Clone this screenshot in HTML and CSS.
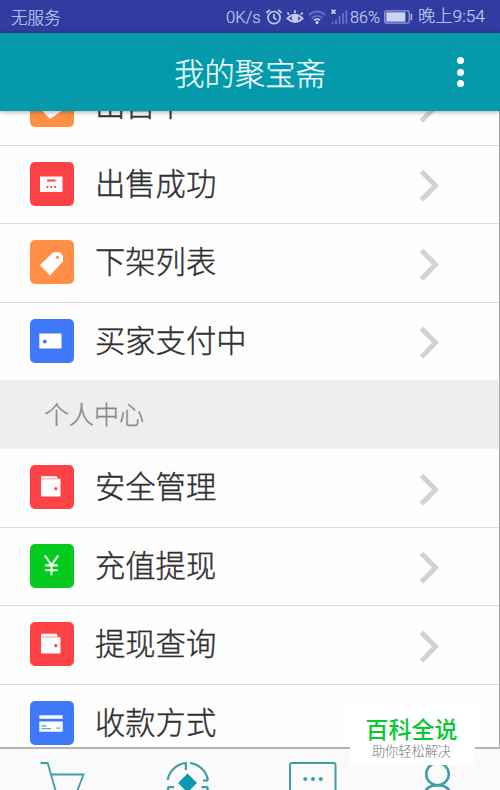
FILE: index.html
```html
<!DOCTYPE html>
<html lang="zh-CN">
<head>
    <meta charset="utf-8">
    <title>我的聚宝斋</title>
    <link rel="stylesheet" href="styles.css">
</head>
<body>
    <div class="status-bar">
        <span class="carrier">无服务</span>
        <div class="status-right">
            <span class="speed">0K/s</span>
            <svg class="st-alarm" width="18" height="18" viewBox="0 0 18 18" fill="none" stroke="#c3c8ee" stroke-width="1.7">
                <circle cx="9" cy="9.6" r="6.1"/>
                <path d="M9 6v4l2.6 1.6M1.3 4.8l3.4-3M16.7 4.8l-3.4-3"/>
            </svg>
            <svg class="st-eye" width="18" height="18" viewBox="0 0 18 18" fill="none" stroke="#c3c8ee" stroke-width="1.8">
                <path d="M1.4 10.5Q9 2.8 16.6 10.5Q9 17.4 1.4 10.5zM3 6.7L1.5 4.5M9 5V2.2M15 6.7l1.5-2.2"/>
                <circle cx="9" cy="10" r="2.4" fill="#c3c8ee"/>
            </svg>
            <svg class="st-wifi" width="18" height="18" viewBox="0 0 18 18" fill="none" stroke-width="1.8">
                <path d="M1 7Q9 0 17 7M3.6 10.2Q9 5.5 14.4 10.2" stroke="#6871c4"/>
                <path d="M6 12.3Q9 9.9 12 12.3" stroke="#c3c8ee"/>
                <circle cx="9" cy="14.4" r="1.5" fill="#dde0f8"/>
            </svg>
            <svg class="st-signal" width="18" height="18" viewBox="0 0 18 18" fill="none">
                <path d="M2.6 16v-2M6 16v-4M9.5 16V8M13 16V5M16.4 16V2" stroke="#6871c4" stroke-width="1.8"/>
                <path d="M1.5 1.7l4 4M5.5 1.7l-4 4" stroke="#dde0f8" stroke-width="1.5"/>
            </svg>
            <span class="percent">86%</span>
            <svg class="st-battery" width="29" height="14" viewBox="0 0 29 14">
                <rect x=".8" y=".8" width="24.4" height="12.4" rx="1.8" fill="none" stroke="#969dda" stroke-width="1.3"/>
                <rect x="2.3" y="2.3" width="19" height="9.4" fill="#cdd1f2"/>
                <path d="M27.4 3.8v6.4" stroke="#aeb4e5" stroke-width="1.6"/>
            </svg>
            <span class="clock">晚上9:54</span>
        </div>
    </div>

    <div class="header">
        <h1>我的聚宝斋</h1>
        <div class="more"><i></i><i></i><i></i></div>
    </div>

    <div class="list">
        <div class="row row-first row-tall">
            <svg class="icon orange" viewBox="0 0 44 44"><path d="M10 25.5h25L20 36z" fill="#fff"/></svg>
            <span class="label">出售中</span>
            <svg class="arrow" viewBox="0 0 20 34"><path d="M2.5 2.5L16.5 16.5L2.5 31"/></svg>
        </div>
        <div class="row">
            <svg class="icon red" viewBox="0 0 44 44">
                <path d="M10 14.5h22.5V30H10z" fill="#fff"/>
                <path d="M17 18.5h8.5" stroke="#ff4245" stroke-width="2"/>
                <path d="M16.5 25h1.8M20.4 25h1.8M24.3 25h1.8" stroke="#ff4245" stroke-width="1.8"/>
            </svg>
            <span class="label">出售成功</span>
            <svg class="arrow" viewBox="0 0 20 34"><path d="M2.5 2.5L16.5 16.5L2.5 31"/></svg>
        </div>
        <div class="row row-tall">
            <svg class="icon orange" viewBox="0 0 44 44">
                <path d="M10 25L22.3 13.2Q23.4 12.2 25 12.2h4.6q3.4 1.8 3.4 4.8v4.2L20 35.5z" fill="#fff"/>
                <circle cx="27.5" cy="17.3" r="1.6" fill="#ff8f45"/>
            </svg>
            <span class="label">下架列表</span>
            <svg class="arrow arrow-low" viewBox="0 0 20 34"><path d="M2.5 2.5L16.5 16.5L2.5 31"/></svg>
        </div>
        <div class="row row-last">
            <svg class="icon blue" viewBox="0 0 44 44">
                <path d="M9.3 14.5H31.5V29.5H9.3z" fill="#fff"/>
                <circle cx="14.8" cy="22.5" r="1.9" fill="#3e79fa"/>
            </svg>
            <span class="label">买家支付中</span>
            <svg class="arrow" viewBox="0 0 20 34"><path d="M2.5 2.5L16.5 16.5L2.5 31"/></svg>
        </div>

        <div class="section">个人中心</div>

        <div class="row row-tall">
            <svg class="icon red" viewBox="0 0 44 44">
                <path d="M11 12.5q0-1.3 1.3-1.3h14q1.2 0 1.2 2.6h3V31q0 .6-.6.6H11z" fill="#fff"/>
                <path d="M12 13.8h15.5" stroke="#ff8b8d" stroke-width=".9"/>
                <circle cx="25.8" cy="23.7" r="1.6" fill="#ff4245"/>
            </svg>
            <span class="label">安全管理</span>
            <svg class="arrow arrow-low" viewBox="0 0 20 34"><path d="M2.5 2.5L16.5 16.5L2.5 31"/></svg>
        </div>
        <div class="row">
            <svg class="icon green" viewBox="0 0 44 44">
                <path d="M14.8 11.5L21.5 21l6.7-9.5M21.5 21v10.3M15.2 21.4h12.7M15.2 26.2h12.7" fill="none" stroke="#f0fff0" stroke-width="2.1"/>
            </svg>
            <span class="label">充值提现</span>
            <svg class="arrow" viewBox="0 0 20 34"><path d="M2.5 2.5L16.5 16.5L2.5 31"/></svg>
        </div>
        <div class="row row-tall">
            <svg class="icon red" viewBox="0 0 44 44">
                <path d="M11 13q0-1.3 1.3-1.3h14q1.2 0 1.2 3.6h3V31q0 .6-.6.6H11z" fill="#fff"/>
                <path d="M12 15h15.5" stroke="#ff8b8d" stroke-width=".9"/>
                <circle cx="25.8" cy="23.7" r="1.6" fill="#ff4245"/>
            </svg>
            <span class="label">提现查询</span>
            <svg class="arrow arrow-low" viewBox="0 0 20 34"><path d="M2.5 2.5L16.5 16.5L2.5 31"/></svg>
        </div>
        <div class="row row-cut">
            <svg class="icon blue" viewBox="0 0 44 44">
                <path d="M9.3 14.3h23.4v3.5H9.3zM9.3 20.5h23.4v10.2H9.3z" fill="#fff"/>
                <path d="M11.5 25h5M11.5 27.7h9.5M26.5 27.2h3.7" stroke="#6d98f8" stroke-width="1.3"/>
            </svg>
            <span class="label">收款方式</span>
        </div>
    </div>

    <div class="tab-bar">
        <div class="tab">
            <svg width="46" height="54" viewBox="0 0 46 54" fill="none" stroke="#409da6" stroke-width="1.8">
                <path d="M.5 2h7.2l10 35h20M10.5 13.5H43.5L36.5 32"/>
            </svg>
        </div>
        <div class="tab">
            <svg width="44" height="54" viewBox="0 0 44 54" fill="none" stroke="#409da6" stroke-width="2.2">
                <path d="M1.6 19A21 21 0 0 1 19.8 2V9M24 2A21 21 0 0 1 42 19.5M1.6 26.2H8M1.6 26.2A21 21 0 0 0 19 43.5M42 26.2H35.5M42 26.2A21 21 0 0 1 24 43.5M42 19.5h-5"/>
                <path d="M21.5 12.5L31 22L21.5 31.5L12 22z" fill="#0d99ac" stroke="none"/>
            </svg>
        </div>
        <div class="tab">
            <svg width="48" height="54" viewBox="0 0 48 54" fill="none" stroke="#409da6" stroke-width="2">
                <rect x="1" y="2" width="45.5" height="38" rx="2"/>
                <g fill="#409da6" stroke="none"><circle cx="16.2" cy="18" r="2"/><circle cx="24" cy="18" r="2"/><circle cx="31.8" cy="18" r="2"/></g>
            </svg>
        </div>
        <div class="tab">
            <svg width="34" height="54" viewBox="0 0 34 54" fill="none" stroke="#409da6" stroke-width="2.5">
                <circle cx="16.5" cy="13" r="11.3"/>
                <path d="M2 40Q2 24.3 16.5 24.3T31 40"/>
            </svg>
        </div>
    </div>

    <div class="watermark">
        <div class="wm-title">百科全说</div>
        <div class="wm-sub">助你轻松解决</div>
    </div>
</body>
</html>
```

FILE: styles.css
```css
* {
    box-sizing: border-box;
}

body {
    margin: 0;
    width: 500px;
    height: 790px;
    overflow: hidden;
    background: #fefefe;
    display: flex;
    flex-direction: column;
    position: relative;
    font-family: Roboto, "Noto Sans CJK SC", sans-serif;
}

.status-bar {
    height: 33px;
    flex: none;
    background: #303c9f;
    color: #c3c8ee;
    display: flex;
    justify-content: space-between;
    align-items: center;
    padding: 1px 11px 0;
    font-size: 16.6px;
    font-weight: 300;
    white-space: nowrap;
    -webkit-text-stroke: 0.2px;
}

.status-right {
    display: flex;
    align-items: center;
}

.status-right svg {
    flex: none;
}

.speed {
    width: 39px;
}

.st-eye {
    margin-left: 3px;
}

.st-wifi {
    margin-left: 4px;
}

.st-signal {
    margin-left: 4px;
}

.percent {
    width: 34px;
    margin-left: 2px;
    font-size: 16.2px;
}

.clock {
    width: 71px;
    margin-left: 5px;
    font-size: 17.3px;
    line-height: 24px;
    padding-bottom: 2px;
}

.header {
    height: 78px;
    flex: none;
    background: #049aac;
    display: flex;
    align-items: center;
    justify-content: center;
    position: relative;
    box-shadow: 0 1px 5px rgba(0,0,0,0.35);
    z-index: 1;
}

.header h1 {
    margin: 0;
    padding-top: 5px;
    font-size: 30.3px;
    font-weight: 300;
    color: #f0ffff;
    line-height: 40px;
    -webkit-text-stroke: 0.25px;
}

.more {
    position: absolute;
    right: 36px;
    top: 24px;
    display: flex;
    flex-direction: column;
    gap: 4.5px;
}

.more i {
    width: 7px;
    height: 7px;
    border-radius: 50%;
    background: #fff;
}

.list {
    height: 638px;
    flex: none;
    overflow: hidden;
    display: flex;
    flex-direction: column;
    border-right: 1px solid #aaa;
    border-bottom: 2px solid #b3b3b3;
}

.row {
    height: 78px;
    flex: none;
    display: flex;
    align-items: flex-start;
    padding: 16px 60px 0 30px;
    border-bottom: 1px solid #d9d9d9;
}

.row-tall {
    height: 79px;
}

/* scrolled halfway under the header */
.row-first {
    margin-top: -44px;
}

.row-last {
    height: 77px;
    border-bottom: none;
}

.row-cut {
    border-bottom: none;
}

.icon {
    width: 44px;
    height: 44px;
    flex: none;
    border-radius: 5px;
}

.orange { background: #ff8f45; }
.red { background: #ff4245; }
.blue { background: #3e79fa; }
.green { background: #04cb1d; }

.label {
    margin-left: 21px;
    padding-top: 1px;
    font-size: 30.3px;
    line-height: 44px;
    font-weight: 300;
    color: #303030;
    -webkit-text-stroke: 0.4px;
}

.arrow {
    width: 20px;
    height: 34px;
    margin: 7px 0 0 auto;
    fill: none;
    stroke: #d2d2d2;
    stroke-width: 5;
}

.arrow-low {
    margin-top: 8px;
}

.section {
    height: 69px;
    flex: none;
    padding: 1px 0 0 44px;
    background: #eee;
    color: #888;
    font-size: 25px;
    font-weight: 300;
    line-height: 69px;
    -webkit-text-stroke: 0.3px;
}

.tab-bar {
    flex: 1;
    min-height: 0;
    overflow: hidden;
    background: #fafafa;
    display: grid;
    grid-template-columns: repeat(4, 1fr);
    padding-top: 12px;
}

.tab {
    display: flex;
    justify-content: center;
}

.watermark {
    position: absolute;
    left: 350px;
    top: 706px;
    width: 125px;
    height: 59px;
    padding-right: 2px;
    background: #fff;
    text-align: center;
    z-index: 2;
}

.wm-title {
    margin-top: 11px;
    font-size: 23px;
    line-height: 27px;
    font-weight: 500;
    color: #06c92f;
}

.wm-sub {
    font-size: 13.2px;
    line-height: 16px;
    font-weight: 300;
    color: #777;
}
```
